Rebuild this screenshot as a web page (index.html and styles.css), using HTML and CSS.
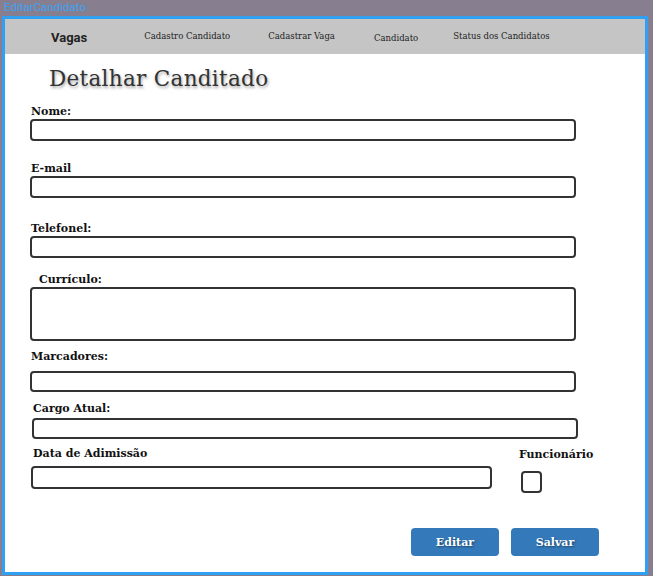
FILE: index.html
```html
<!DOCTYPE html>
<html lang="pt">
<head>
<meta charset="utf-8">
<title>EditarCandidato</title>
<link rel="stylesheet" href="styles.css">
</head>
<body>
<div class="caption">EditarCandidato</div>
<div class="frame">
  <nav class="nav">
    <span class="nav-brand">Vagas</span>
    <span class="nav-item nav-cad">Cadastro Candidato</span>
    <span class="nav-item nav-vaga">Cadastrar Vaga</span>
    <span class="nav-item nav-cand">Candidato</span>
    <span class="nav-item nav-status">Status dos Candidatos</span>
  </nav>
  <main class="content">
    <h1 class="title">Detalhar Canditado</h1>
    <div class="field f-nome">
      <label class="label">Nome:</label>
      <div class="input"></div>
    </div>
    <div class="field f-email">
      <label class="label">E-mail</label>
      <div class="input"></div>
    </div>
    <div class="field f-tel">
      <label class="label">Telefonel:</label>
      <div class="input"></div>
    </div>
    <div class="field f-cv">
      <label class="label">Currículo:</label>
      <div class="input textarea"></div>
    </div>
    <div class="field f-marc">
      <label class="label">Marcadores:</label>
      <div class="input"></div>
    </div>
    <div class="field f-cargo">
      <label class="label">Cargo Atual:</label>
      <div class="input"></div>
    </div>
    <div class="row">
      <div class="field f-data">
        <label class="label">Data de Adimissão</label>
        <div class="input"></div>
      </div>
      <div class="field f-func">
        <label class="label">Funcionário</label>
        <div class="checkbox"></div>
      </div>
    </div>
    <div class="actions">
      <button class="btn">Editar</button>
      <button class="btn">Salvar</button>
    </div>
  </main>
</div>
</body>
</html>
```

FILE: styles.css
```css
html, body {
  margin: 0;
  padding: 0;
}
body {
  background: #877f90;
  width: 653px;
  height: 576px;
  overflow: hidden;
  font-family: "DejaVu Serif", serif;
}
.caption {
  height: 16px;
  padding-left: 4px;
  color: #3ba2f2;
  font-family: "Roboto", "Liberation Sans", sans-serif;
  font-size: 11.5px;
  line-height: 15px;
}
.frame {
  margin-left: 2px;
  width: 640px;
  height: 553px;
  border: 3px solid #31a0f0;
  background: #ffffff;
  display: flex;
  flex-direction: column;
}
.nav {
  height: 35px;
  background: #c5c5c5;
  display: flex;
  align-items: center;
  color: #222;
}
.nav-brand {
  font-family: "Roboto", "Liberation Sans", sans-serif;
  font-weight: bold;
  font-size: 13px;
  margin-left: 46px;
  margin-top: 2px;
}
.nav-item {
  font-size: 8.5px;
}
.nav-cad { margin-left: 57px; margin-top: -1px; }
.nav-vaga { margin-left: 38px; margin-top: -1px; }
.nav-cand { margin-left: 39px; margin-top: 3px; }
.nav-status { margin-left: 35px; margin-top: -1px; }

.content {
  flex: 1;
  padding-left: 25px;
}
.title {
  margin: 9px 0 0 19px;
  font-size: 21.5px;
  line-height: 32px;
  font-weight: normal;
  color: #333;
  letter-spacing: 0.3px;
  text-shadow: 1px 2px 3px rgba(0, 0, 0, 0.35);
}
.field {
  display: flex;
  flex-direction: column;
}
.label {
  font-size: 11px;
  font-weight: bold;
  line-height: 14px;
  color: #111;
  padding-left: 1px;
}
.input {
  width: 542px;
  height: 18px;
  border: 2px solid #333;
  border-radius: 4px;
}
.textarea {
  height: 50px;
}
.f-nome { margin-top: 10px; }
.f-email { margin-top: 21px; }
.f-tel { margin-top: 24px; }
.f-cv { margin-top: 15px; }
.f-cv .label { padding-left: 9px; }
.f-marc { margin-top: 9px; }
.f-marc .label { margin-bottom: 7px; }
.f-marc .input { height: 17px; }
.f-cargo { margin-top: 10px; margin-left: 2px; }
.f-cargo .label { margin-bottom: 2px; }
.f-cargo .input { height: 17px; }
.row {
  display: flex;
  margin-top: 8px;
}
.f-data { margin-left: 1px; }
.f-data .label { padding-left: 2px; margin-bottom: 5px; }
.f-data .input { width: 457px; height: 19px; }
.f-func { margin-left: 26px; margin-top: 1px; }
.checkbox {
  width: 17px;
  height: 18px;
  border: 2px solid #333;
  border-radius: 4px;
  margin-top: 9px;
  margin-left: 3px;
}
.actions {
  display: flex;
  justify-content: flex-end;
  gap: 12px;
  margin-top: 35px;
  padding-right: 46px;
}
.btn {
  width: 88px;
  height: 28px;
  border: none;
  border-radius: 4px;
  background: #3479ba;
  color: #fff;
  font-family: "DejaVu Serif", serif;
  font-size: 11px;
  font-weight: bold;
  text-shadow: 1px 1px 2px rgba(0, 0, 0, 0.45);
  padding: 0;
}
```
